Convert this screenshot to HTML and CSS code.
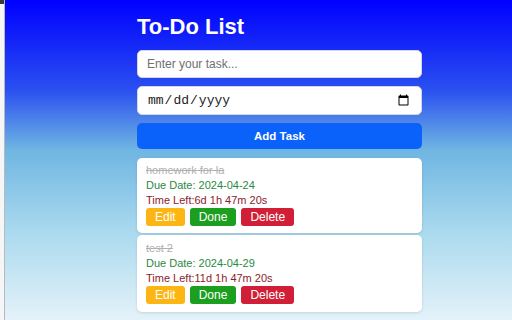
FILE: index.html
```html
<!DOCTYPE html>
<html>
<head>
<meta charset="utf-8">
<link rel="stylesheet" href="styles.css">
</head>
<body>
<div class="edge"></div>
<main class="page">
  <div class="app">
    <h1 class="title">To-Do List</h1>
    <input class="field" type="text" placeholder="Enter your task...">
    <input class="field date" type="date">
    <button class="add">Add Task</button>
    <ul class="tasks">
      <li class="card">
        <div class="name">homework for la</div>
        <div class="due">Due Date: 2024-04-24</div>
        <div class="left">Time Left:6d 1h 47m 20s</div>
        <div class="actions">
          <button class="btn edit">Edit</button>
          <button class="btn done">Done</button>
          <button class="btn delete">Delete</button>
        </div>
      </li>
      <li class="card">
        <div class="name">test 2</div>
        <div class="due">Due Date: 2024-04-29</div>
        <div class="left">Time Left:11d 1h 47m 20s</div>
        <div class="actions">
          <button class="btn edit">Edit</button>
          <button class="btn done">Done</button>
          <button class="btn delete">Delete</button>
        </div>
      </li>
    </ul>
  </div>
</main>
</body>
</html>
```
FILE: styles.css
```css
html, body {
  margin: 0;
  height: 100%;
}
body {
  display: flex;
  font-family: "Liberation Sans", Arial, sans-serif;
  overflow: hidden;
}
.edge {
  width: 4px;
  flex: none;
  background: linear-gradient(to bottom, #3a3a3a 0, #3a3a3a 4px, #f6f6f6 4px);
  border-right: 1px solid #b8b8c0;
}
.page {
  flex: 1;
  background: linear-gradient(to bottom, #0000ff 0, #2a50f0 90px, #6fb6e2 150px, #a9d9ee 230px, #e4f2f9 320px);
  padding: 14px 0 0 132px;
}
.app {
  width: 285px;
  display: flex;
  flex-direction: column;
}
.title {
  margin: 0 0 10px;
  color: #fff;
  font-size: 22px;
  line-height: 26px;
  font-weight: bold;
}
.field {
  box-sizing: border-box;
  height: 28px;
  margin: 0 0 8px;
  padding: 0 9px;
  border: 1px solid #d6d6e6;
  border-radius: 5px;
  background: #fff;
  font-family: "Liberation Sans", Arial, sans-serif;
  font-size: 12px;
  color: #222;
  outline: none;
}
.field::placeholder {
  color: #6f6f6f;
}
.date {
  height: 29px;
  font-family: "Liberation Mono", monospace;
  font-size: 13px;
  color: #222;
}
.add {
  height: 26px;
  margin: 0 0 9px;
  border: none;
  border-radius: 5px;
  background: #0b62fb;
  color: #fff;
  font-family: "Liberation Sans", Arial, sans-serif;
  font-size: 11.5px;
  font-weight: bold;
}
.tasks {
  list-style: none;
  margin: 0;
  padding: 0;
  display: flex;
  flex-direction: column;
  gap: 2px;
}
.card {
  background: #fff;
  border-radius: 5px;
  box-shadow: 0 1px 3px rgba(0, 0, 0, 0.12);
  padding: 5px 9px 7px;
  font-size: 11px;
  line-height: 15px;
}
.card + .card {
  padding-top: 6px;
  padding-bottom: 8px;
}
.name {
  color: #b0b0b0;
  text-decoration: line-through;
}
.due {
  color: #2a8a3e;
}
.left {
  color: #8c1c2a;
}
.actions {
  display: flex;
  gap: 5px;
}
.btn {
  height: 18px;
  padding: 0 9px;
  border: none;
  border-radius: 3px;
  color: #fff;
  font-family: "Liberation Sans", Arial, sans-serif;
  font-size: 12px;
  line-height: 18px;
}
.edit { background: #fdb514; }
.done { background: #1c9e1f; }
.delete { background: #d01f36; }
```
